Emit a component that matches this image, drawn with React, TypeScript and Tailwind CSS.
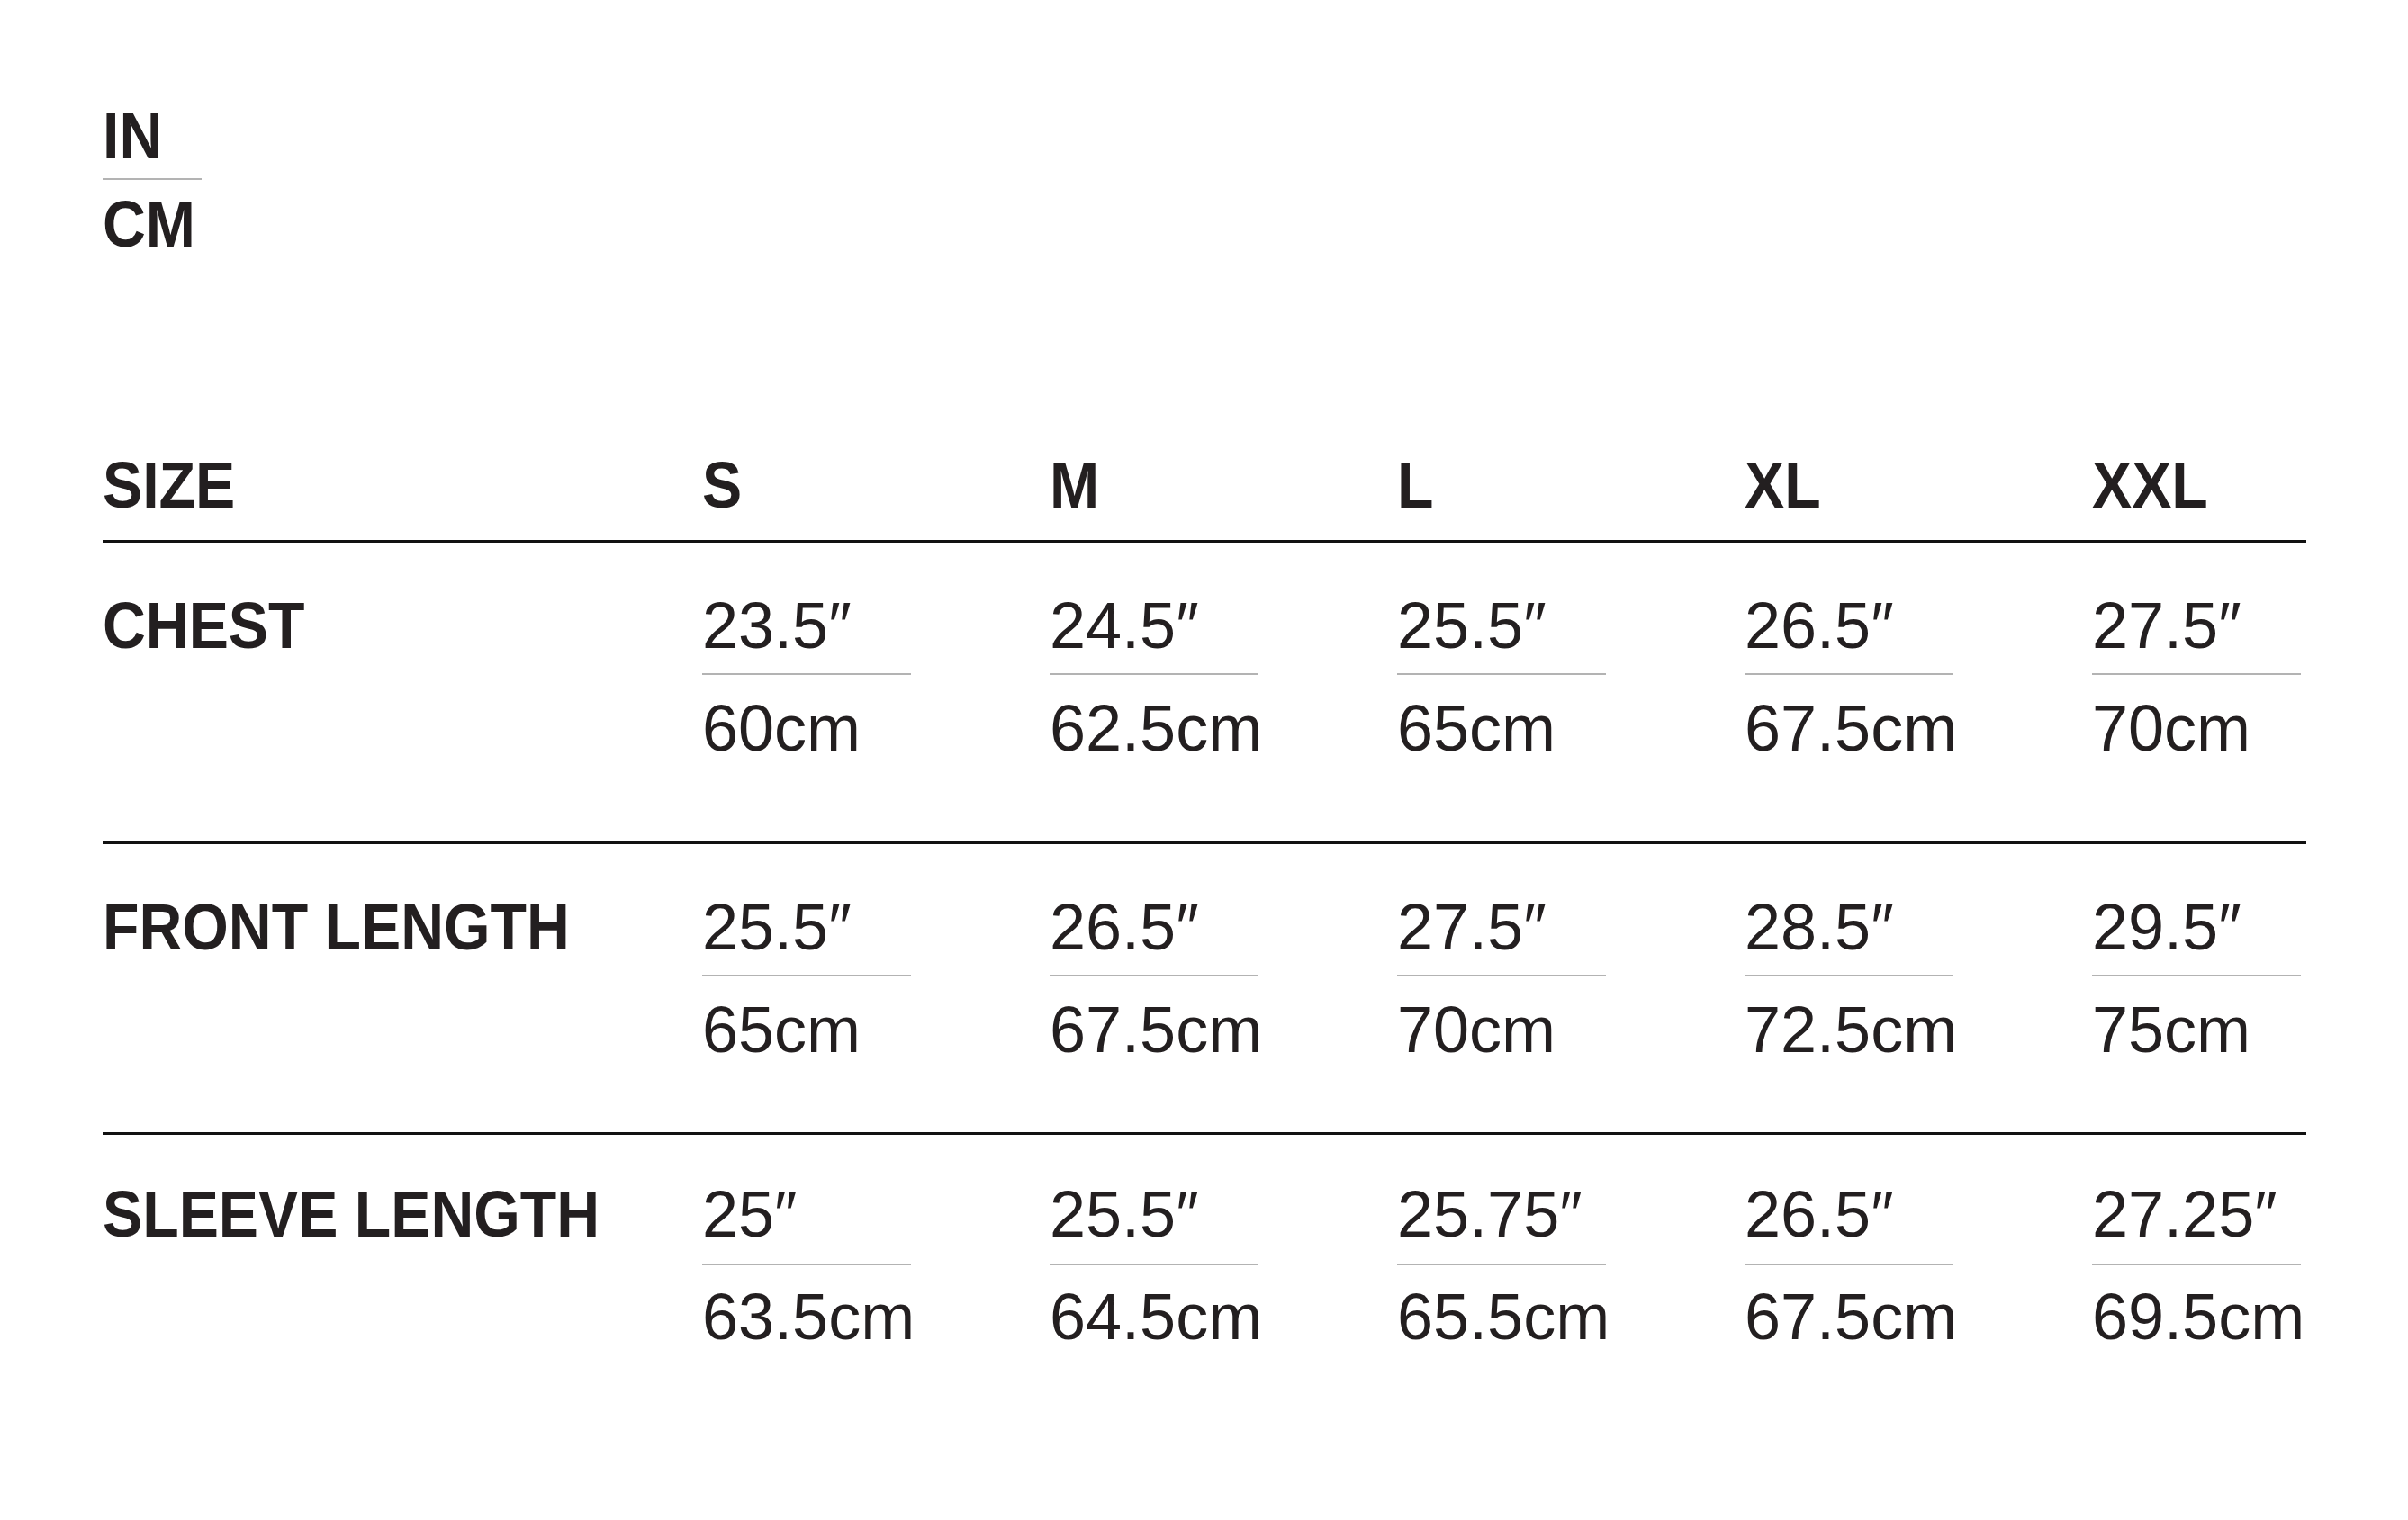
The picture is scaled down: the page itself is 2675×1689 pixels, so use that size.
import React from 'react';

type Row = {
  label: string;
  inches: string[];
  cm: string[];
  pad: string;
  gapTop: string;
  gapBottom: string;
};

const SIZES = ['S', 'M', 'L', 'XL', 'XXL'];

const ROWS: Row[] = [
  {
    label: 'CHEST',
    inches: ['23.5″', '24.5″', '25.5″', '26.5″', '27.5″'],
    cm: ['60cm', '62.5cm', '65cm', '67.5cm', '70cm'],
    pad: 'pt-[56px] pb-[90px]',
    gapTop: 'mt-[17px]',
    gapBottom: 'mt-[23px]',
  },
  {
    label: 'FRONT LENGTH',
    inches: ['25.5″', '26.5″', '27.5″', '28.5″', '29.5″'],
    cm: ['65cm', '67.5cm', '70cm', '72.5cm', '75cm'],
    pad: 'pt-[56px] pb-[78px]',
    gapTop: 'mt-[17px]',
    gapBottom: 'mt-[23px]',
  },
  {
    label: 'SLEEVE LENGTH',
    inches: ['25″', '25.5″', '25.75″', '26.5″', '27.25″'],
    cm: ['63.5cm', '64.5cm', '65.5cm', '67.5cm', '69.5cm'],
    pad: 'pt-[52px] pb-[60px]',
    gapTop: 'mt-[19px]',
    gapBottom: 'mt-[21px]',
  },
];

const font = "font-['Liberation_Sans',Arial,sans-serif]";
const cols = 'grid grid-cols-[666px_386px_386px_386px_386px_238px]';
// bold caps in the reference are a narrower grotesk: squeeze horizontally
const bold = 'inline-block origin-left scale-x-[0.92] text-[72px] font-bold leading-none whitespace-nowrap';
const value = 'text-[72px] font-normal leading-none whitespace-nowrap';

function Label({ children }: { children: React.ReactNode }) {
  return (
    <div className="leading-none">
      <span className={bold}>{children}</span>
    </div>
  );
}

export default function App() {
  return (
    <div className={`min-h-screen w-full bg-white text-[#231f20] ${font}`}>
      <div className="pl-[114px] pt-[115px]">
        {/* unit toggle */}
        <div className="flex w-[110px] flex-col">
          <Label>IN</Label>
          <div className="mt-[11px] h-[2px] w-full bg-[#b3b3b3]" />
          <div className="mt-[13px]">
            <Label>CM</Label>
          </div>
        </div>

        <div className="mt-[218px] w-[2448px]">
          {/* header */}
          <div className={`${cols} pb-[25px]`}>
            <Label>SIZE</Label>
            {SIZES.map((s) => (
              <Label key={s}>{s}</Label>
            ))}
          </div>

          {ROWS.map((row) => (
            <div key={row.label} className={`${cols} border-t-[3px] border-[#111] ${row.pad}`}>
              <Label>{row.label}</Label>
              {row.inches.map((v, i) => (
                <div key={i} className="flex flex-col">
                  <span className={value}>{v}</span>
                  <div className={`${row.gapTop} h-[2px] w-[232px] bg-[#b3b3b3]`} />
                  <span className={`${row.gapBottom} ${value}`}>{row.cm[i]}</span>
                </div>
              ))}
            </div>
          ))}
        </div>
      </div>
    </div>
  );
}
